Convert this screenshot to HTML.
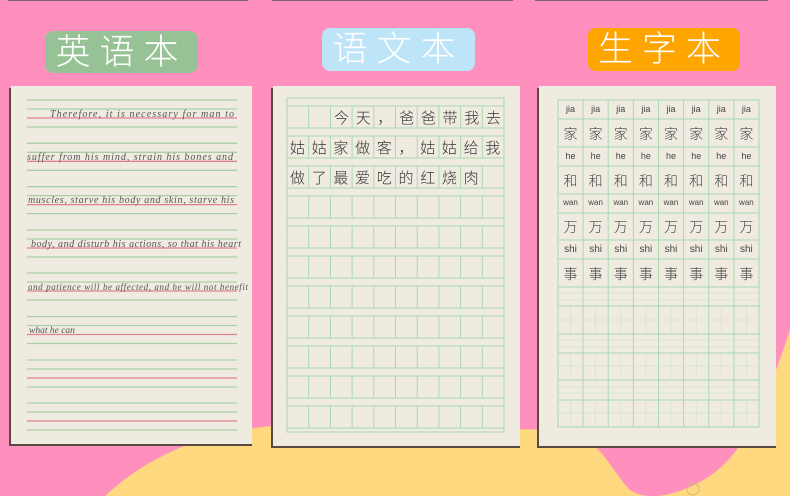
<!DOCTYPE html>
<html><head><meta charset="utf-8">
<style>
html,body{margin:0;padding:0;background:#ff90be;}
body{width:790px;height:496px;overflow:hidden;position:relative;font-family:"Liberation Sans","Noto Sans CJK SC",sans-serif;}
.lab{position:absolute;color:#fff;font-size:35px;letter-spacing:9px;text-align:center;line-height:43px;border-radius:8px;font-family:"Liberation Sans","Noto Sans CJK SC",sans-serif;font-weight:300;}
</style></head><body>
<svg width="790" height="496" style="position:absolute;left:0;top:0" xmlns="http://www.w3.org/2000/svg">
<path d="M105,496 C160,445 230,425 300,425 L560,430 C600,435 610,470 630,490 C645,500 670,498 700,482 C740,460 760,420 790,330 L790,496 Z" fill="#ffd980"/>
<rect x="8" y="0" width="240" height="1" fill="#7a6470"/>
<rect x="272" y="0" width="241" height="1" fill="#7a6470"/>
<rect x="535" y="0" width="233" height="1" fill="#7a6470"/>
<circle cx="693" cy="489" r="6" fill="none" stroke="#c9c070" stroke-width="1"/>

<!-- pages with shadow -->
<rect x="9" y="88" width="243" height="358" fill="#5a4a44"/>
<rect x="11" y="86" width="241" height="358" fill="#f0ebe0"/>
<rect x="271" y="88" width="249" height="360" fill="#5a4a44"/>
<rect x="273" y="86" width="247" height="360" fill="#f0ebe0"/>
<rect x="537" y="88" width="239" height="360" fill="#5a4a44"/>
<rect x="539" y="86" width="237" height="360" fill="#f0ebe0"/>

<!-- English lines -->
<g stroke-width="1.3">
<g stroke="#a9cfa8">
<line x1="27" x2="237" y1="100" y2="100"/><line x1="27" x2="237" y1="109" y2="109"/><line x1="27" x2="237" y1="127" y2="127"/>
<line x1="27" x2="237" y1="143.3" y2="143.3"/><line x1="27" x2="237" y1="152.3" y2="152.3"/><line x1="27" x2="237" y1="170.3" y2="170.3"/>
<line x1="27" x2="237" y1="186.6" y2="186.6"/><line x1="27" x2="237" y1="195.6" y2="195.6"/><line x1="27" x2="237" y1="213.6" y2="213.6"/>
<line x1="27" x2="237" y1="230" y2="230"/><line x1="27" x2="237" y1="239" y2="239"/><line x1="27" x2="237" y1="257" y2="257"/>
<line x1="27" x2="237" y1="273" y2="273"/><line x1="27" x2="237" y1="282" y2="282"/><line x1="27" x2="237" y1="300" y2="300"/>
<line x1="27" x2="237" y1="316.5" y2="316.5"/><line x1="27" x2="237" y1="325.5" y2="325.5"/><line x1="27" x2="237" y1="343.5" y2="343.5"/>
<line x1="27" x2="237" y1="360" y2="360"/><line x1="27" x2="237" y1="369" y2="369"/><line x1="27" x2="237" y1="387" y2="387"/>
<line x1="27" x2="237" y1="403" y2="403"/><line x1="27" x2="237" y1="412" y2="412"/><line x1="27" x2="237" y1="430" y2="430"/>
</g>
<g stroke="#e0808f">
<line x1="27" x2="237" y1="118" y2="118"/><line x1="27" x2="237" y1="161.3" y2="161.3"/><line x1="27" x2="237" y1="204.6" y2="204.6"/>
<line x1="27" x2="237" y1="248" y2="248"/><line x1="27" x2="237" y1="291" y2="291"/><line x1="27" x2="237" y1="334.5" y2="334.5"/>
<line x1="27" x2="237" y1="378" y2="378"/><line x1="27" x2="237" y1="421" y2="421"/>
</g></g>
<g font-family="Liberation Serif, serif" font-style="italic" font-size="10" fill="#555">
<text x="50" y="117" textLength="184">Therefore, it is necessary  for man to</text>
<text x="27" y="160" textLength="206">suffer from his mind, strain his bones and</text>
<text x="28" y="203" textLength="206">muscles, starve his body and skin, starve his</text>
<text x="31" y="247" textLength="210">body, and disturb his actions, so that his heart</text>
<text x="28" y="290" font-size="9" textLength="220">and patience will be affected, and he will not benefit</text>
<text x="29" y="333" font-size="9.5">what he can</text>
</g>

<!-- Chinese grid -->
<g stroke="#a8d9b0" stroke-width="1" fill="none">
<rect x="287" y="98" width="217" height="334"/>
<path d="M287,106H504M287,128H504M287,136H504M287,158H504M287,166H504M287,188H504M287,196H504M287,218H504M287,226H504M287,248H504M287,256H504M287,278H504M287,286H504M287,308H504M287,316H504M287,338H504M287,346H504M287,368H504M287,376H504M287,398H504M287,406H504M287,428H504"/>
<path d="M308.7,106V128M330.4,106V128M352.1,106V128M373.8,106V128M395.5,106V128M417.2,106V128M438.9,106V128M460.6,106V128M482.3,106V128
M308.7,136V158M330.4,136V158M352.1,136V158M373.8,136V158M395.5,136V158M417.2,136V158M438.9,136V158M460.6,136V158M482.3,136V158
M308.7,166V188M330.4,166V188M352.1,166V188M373.8,166V188M395.5,166V188M417.2,166V188M438.9,166V188M460.6,166V188M482.3,166V188
M308.7,196V218M330.4,196V218M352.1,196V218M373.8,196V218M395.5,196V218M417.2,196V218M438.9,196V218M460.6,196V218M482.3,196V218
M308.7,226V248M330.4,226V248M352.1,226V248M373.8,226V248M395.5,226V248M417.2,226V248M438.9,226V248M460.6,226V248M482.3,226V248
M308.7,256V278M330.4,256V278M352.1,256V278M373.8,256V278M395.5,256V278M417.2,256V278M438.9,256V278M460.6,256V278M482.3,256V278
M308.7,286V308M330.4,286V308M352.1,286V308M373.8,286V308M395.5,286V308M417.2,286V308M438.9,286V308M460.6,286V308M482.3,286V308
M308.7,316V338M330.4,316V338M352.1,316V338M373.8,316V338M395.5,316V338M417.2,316V338M438.9,316V338M460.6,316V338M482.3,316V338
M308.7,346V368M330.4,346V368M352.1,346V368M373.8,346V368M395.5,346V368M417.2,346V368M438.9,346V368M460.6,346V368M482.3,346V368
M308.7,376V398M330.4,376V398M352.1,376V398M373.8,376V398M395.5,376V398M417.2,376V398M438.9,376V398M460.6,376V398M482.3,376V398
M308.7,406V428M330.4,406V428M352.1,406V428M373.8,406V428M395.5,406V428M417.2,406V428M438.9,406V428M460.6,406V428M482.3,406V428"/>
</g>
<g font-family="Noto Sans CJK SC, sans-serif" font-size="15" fill="#333" font-weight="300">
<text x="334" y="123" letter-spacing="6.7">今天，爸爸带我去</text>
<text x="290" y="153" letter-spacing="6.7">姑姑家做客，姑姑给我</text>
<text x="290" y="183" letter-spacing="6.7">做了最爱吃的红烧肉</text>
</g>

<!-- Pinyin grid -->
<g stroke="#a8d9b0" stroke-width="1" fill="none">
<rect x="558" y="100" width="201" height="327"/>
<path d="M558,119H759M558,147H759M558,166H759M558,194H759M558,213H759M558,240H759M558,259H759M558,287H759M558,306H759M558,334H759M558,353H759M558,380H759M558,400H759"/>
<path d="M583.1,100V427M608.2,100V427M633.4,100V427M658.5,100V427M683.6,100V427M708.8,100V427M733.9,100V427"/>
</g>
<g stroke="#cfe5d3" stroke-width="0.8" fill="none">
<path d="M558,293H759M558,300H759M558,340H759M558,347H759M558,387H759M558,393H759M558,320H759M558,366H759M558,413H759"/>
<path d="M570.5,306V334M595.6,306V334M620.8,306V334M645.9,306V334M671,306V334M696.2,306V334M721.3,306V334M746.4,306V334
M570.5,353V380M595.6,353V380M620.8,353V380M645.9,353V380M671,353V380M696.2,353V380M721.3,353V380M746.4,353V380
M570.5,400V427M595.6,400V427M620.8,400V427M645.9,400V427M671,400V427M696.2,400V427M721.3,400V427M746.4,400V427"/>
</g>
<g font-family="Liberation Sans, sans-serif" font-size="9" fill="#444" text-anchor="middle">
<text y="112"><tspan x="570.5">jia</tspan><tspan x="595.6">jia</tspan><tspan x="620.8">jia</tspan><tspan x="645.9">jia</tspan><tspan x="671">jia</tspan><tspan x="696.2">jia</tspan><tspan x="721.3">jia</tspan><tspan x="746.4">jia</tspan></text>
<text y="159"><tspan x="570.5">he</tspan><tspan x="595.6">he</tspan><tspan x="620.8">he</tspan><tspan x="645.9">he</tspan><tspan x="671">he</tspan><tspan x="696.2">he</tspan><tspan x="721.3">he</tspan><tspan x="746.4">he</tspan></text>
<text y="205" font-size="8"><tspan x="570.5">wan</tspan><tspan x="595.6">wan</tspan><tspan x="620.8">wan</tspan><tspan x="645.9">wan</tspan><tspan x="671">wan</tspan><tspan x="696.2">wan</tspan><tspan x="721.3">wan</tspan><tspan x="746.4">wan</tspan></text>
<text y="252" font-size="10"><tspan x="570.5">shi</tspan><tspan x="595.6">shi</tspan><tspan x="620.8">shi</tspan><tspan x="645.9">shi</tspan><tspan x="671">shi</tspan><tspan x="696.2">shi</tspan><tspan x="721.3">shi</tspan><tspan x="746.4">shi</tspan></text>
</g>
<g font-family="Noto Sans CJK SC, sans-serif" font-size="14" fill="#444" text-anchor="middle" font-weight="300">
<text y="139"><tspan x="570.5">家</tspan><tspan x="595.6">家</tspan><tspan x="620.8">家</tspan><tspan x="645.9">家</tspan><tspan x="671">家</tspan><tspan x="696.2">家</tspan><tspan x="721.3">家</tspan><tspan x="746.4">家</tspan></text>
<text y="186"><tspan x="570.5">和</tspan><tspan x="595.6">和</tspan><tspan x="620.8">和</tspan><tspan x="645.9">和</tspan><tspan x="671">和</tspan><tspan x="696.2">和</tspan><tspan x="721.3">和</tspan><tspan x="746.4">和</tspan></text>
<text y="232"><tspan x="570.5">万</tspan><tspan x="595.6">万</tspan><tspan x="620.8">万</tspan><tspan x="645.9">万</tspan><tspan x="671">万</tspan><tspan x="696.2">万</tspan><tspan x="721.3">万</tspan><tspan x="746.4">万</tspan></text>
<text y="279"><tspan x="570.5">事</tspan><tspan x="595.6">事</tspan><tspan x="620.8">事</tspan><tspan x="645.9">事</tspan><tspan x="671">事</tspan><tspan x="696.2">事</tspan><tspan x="721.3">事</tspan><tspan x="746.4">事</tspan></text>
</g>
</svg>
<div class="lab" style="left:45px;top:31px;width:153px;height:42px;background:#97c295;">英语本</div>
<div class="lab" style="left:322px;top:28px;width:153px;height:43px;background:#bde4f7;">语文本</div>
<div class="lab" style="left:588px;top:28px;width:152px;height:43px;background:#ffa500;">生字本</div>
</body></html>
